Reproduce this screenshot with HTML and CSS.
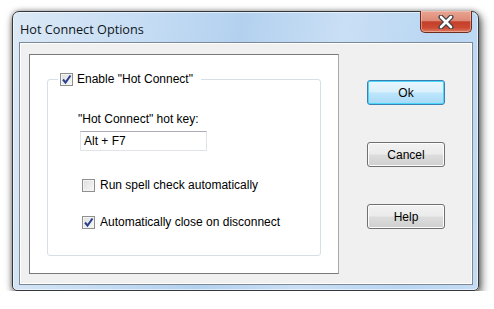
FILE: index.html
```html
<!DOCTYPE html>
<html lang="en">
  <head>
    <meta charset="UTF-8" />
    <meta name="viewport" content="width=device-width, initial-scale=1.0" />
    <title>Hot Connect Options</title>
    <link rel="stylesheet" href="styles.css">
  </head>
  <body>
    <div class="window">
      <div class="titlebar">
        <span class="title">Hot Connect Options</span>
        <button class="close-btn" aria-label="Close">
          <svg width="16" height="14" viewBox="0 0 16 14">
            <path d="M3 2 L13 12 M13 2 L3 12" stroke="#3a3f48" stroke-width="5" stroke-linecap="round" fill="none" />
            <path d="M3 2 L13 12 M13 2 L3 12" stroke="#ffffff" stroke-width="2.6" stroke-linecap="round" fill="none" />
          </svg>
        </button>
      </div>

      <div class="client">
        <div class="panel">
          <fieldset class="group">
            <legend class="group-legend">
              <span class="check">
                <svg width="11" height="11" viewBox="0 0 11 11"><path d="M2 5.5 L4.5 8.5 L9.5 1.5" stroke="#2a3f8c" stroke-width="2" fill="none" /></svg>
              </span>
              Enable "Hot Connect"
            </legend>

            <div class="field-label">"Hot Connect" hot key:</div>
            <div class="textbox">Alt + F7</div>

            <label class="option">
              <span class="check"></span>
              Run spell check automatically
            </label>
            <label class="option second">
              <span class="check">
                <svg width="11" height="11" viewBox="0 0 11 11"><path d="M2 5.5 L4.5 8.5 L9.5 1.5" stroke="#2a3f8c" stroke-width="2" fill="none" /></svg>
              </span>
              Automatically close on disconnect
            </label>
          </fieldset>
        </div>

        <div class="buttons">
          <button class="btn btn-default">Ok</button>
          <button class="btn">Cancel</button>
          <button class="btn">Help</button>
        </div>
      </div>
    </div>
  </body>
</html>
```

FILE: styles.css
```css
/* General */
body {
  margin: 0;
  padding: 11px 0 0 12px;
  background: #ffffff;
  font-family: "Liberation Sans", Arial, sans-serif;
  font-size: 12px;
  color: #000;
}

/* Window frame */
.window {
  width: 467px;
  height: 280px;
  box-sizing: border-box;
  display: flex;
  flex-direction: column;
  border: 1px solid #34373c;
  border-radius: 7px 7px 5px 5px;
  background:
    linear-gradient(100deg, #dce9f6 0%, #c6ddf4 25%, #b3d1ef 45%, #c9dff5 65%, #b9d6f2 85%, #c4dcf4 100%);
  box-shadow:
    inset 0 0 0 1px rgba(255, 255, 255, 0.55),
    2px 4px 10px rgba(0, 0, 0, 0.65),
    0 0 5px rgba(0, 0, 0, 0.35);
}

.titlebar {
  height: 30px;
  display: flex;
  align-items: flex-start;
  padding: 0 6px 0 7px;
}

.title {
  font-family: "Open Sans", sans-serif;
  font-size: 12.7px;
  color: #0f1620;
  padding-top: 8px;
}

/* Close button */
.close-btn {
  margin-left: auto;
  margin-top: -1px;
  width: 52px;
  height: 22px;
  padding: 0;
  display: flex;
  align-items: center;
  justify-content: center;
  border: 1px solid #6e2b20;
  border-top: none;
  border-radius: 0 0 5px 5px;
  background: linear-gradient(#e9a593 0%, #dd8b77 45%, #c43f29 52%, #cc4a33 80%, #dc7e63 100%);
  box-shadow: inset 0 0 0 1px rgba(255, 210, 200, 0.45);
}

/* Client area */
.client {
  flex: 1;
  margin: 0 5px 5px 6px;
  display: flex;
  align-items: flex-start;
  padding: 11px 0 0 9px;
  background: #f0f0f0;
  border: 1px solid #7d8896;
  box-shadow: inset 0 0 0 1px #ffffff;
}

.panel {
  width: 310px;
  height: 220px;
  box-sizing: border-box;
  background: #fff;
  border: 1px solid #7a7a7a;
  border-right-color: #a8a8a8;
  padding: 17px 0 0 17px;
}

/* Group box */
.group {
  width: 274px;
  height: 184px;
  box-sizing: border-box;
  margin: 0;
  padding: 26px 0 0 30px;
  border: 1px solid #d5dfe5;
  border-radius: 3px;
  display: flex;
  flex-direction: column;
  align-items: flex-start;
}

.group-legend {
  display: flex;
  align-items: center;
  gap: 4px;
  padding: 0 8px 0 2px;
  margin-left: -20px;
  line-height: 14px;
}

.check {
  width: 13px;
  height: 13px;
  box-sizing: border-box;
  border: 1px solid #8e8f8f;
  background: linear-gradient(135deg, #dedede, #f8f8f8);
  box-shadow: inset 0 0 0 1px #f4f4f4;
  display: flex;
  align-items: center;
  justify-content: center;
  flex-shrink: 0;
}

.field-label {
  line-height: 14px;
}

.textbox {
  margin: 5px 0 0 2px;
  width: 127px;
  height: 20px;
  box-sizing: border-box;
  border: 1px solid #e0e4e9;
  border-top-color: #abadb3;
  padding: 2px 0 0 3px;
  line-height: 14px;
}

.option {
  display: flex;
  align-items: center;
  gap: 5px;
  margin: 27px 0 0 4px;
  line-height: 14px;
}

.option.second {
  margin-top: 23px;
}

/* Dialog buttons */
.buttons {
  display: flex;
  flex-direction: column;
  gap: 37px;
  margin: 26px 0 0 28px;
}

.btn {
  width: 78px;
  height: 25px;
  font-family: "Liberation Sans", Arial, sans-serif;
  font-size: 12px;
  color: #000;
  border: 1px solid #707070;
  border-radius: 3px;
  background: linear-gradient(#f2f2f2 0%, #ebebeb 49%, #dddddd 51%, #cfcfcf 100%);
  box-shadow: inset 0 0 0 1px #fcfcfc;
  padding: 0;
}

.btn-default {
  border-color: #3c7fb1;
  background: linear-gradient(#eaf6fd 0%, #d9f0fc 49%, #bee6fd 51%, #a7d9f5 100%);
  box-shadow: inset 0 0 0 1px #48d8fb;
}
```
